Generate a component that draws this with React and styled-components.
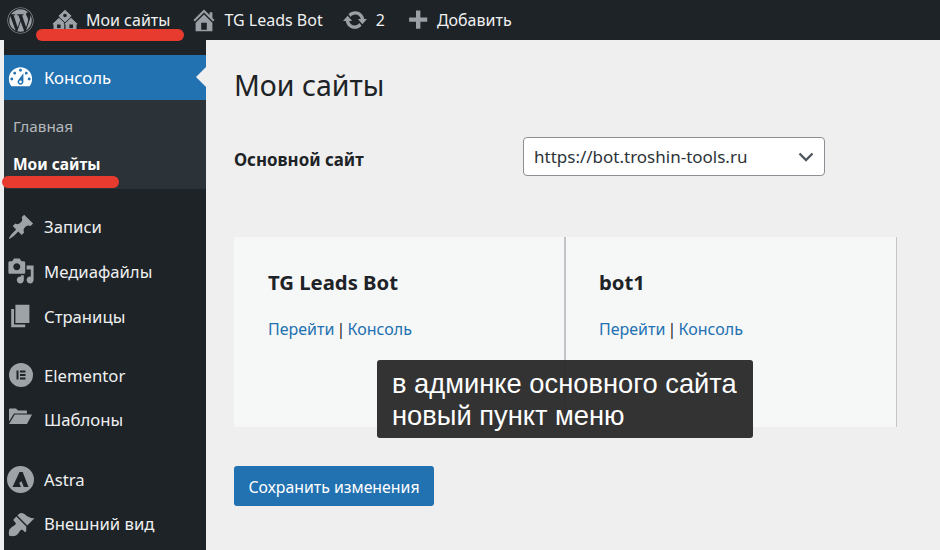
import React from 'react';
import styled, { createGlobalStyle } from 'styled-components';
import { FaWordpress } from 'react-icons/fa';

const GlobalStyle = createGlobalStyle`
  html, body {
    margin: 0;
    padding: 0;
    height: 100%;
    background: #efefef;
    overflow: hidden;
    font-family: "Noto Sans", "Open Sans", sans-serif;
  }
  * { box-sizing: border-box; }
`;

const Page = styled.div`
  position: relative;
  width: 940px;
  height: 550px;
  overflow: hidden;
`;

/* top admin bar */
const TopBar = styled.header`
  display: flex;
  align-items: center;
  height: 40px;
  background: #1d2327;
  color: #f0f0f1;
  font-size: 16px;
  padding-left: 7px;
`;

const BarItem = styled.div`
  display: flex;
  align-items: center;
  gap: ${(p) => p.$gap || 8}px;
  margin-left: ${(p) => p.$left || 0}px;
  white-space: nowrap;
  svg { fill: #9aa0a5; flex: none; display: block; }
`;

const Body = styled.div`
  display: flex;
  height: 510px;
  padding-left: 4px;
`;

/* left menu */
const Sidebar = styled.nav`
  width: 202px;
  flex: none;
  background: #1d2327;
  padding-top: 15px;
`;

const MenuItem = styled.div`
  position: relative;
  display: flex;
  align-items: center;
  height: 44.6px;
  color: #f0f0f1;
  font-size: 16.7px;
  margin-top: ${(p) => p.$top || 0}px;
  background: ${(p) => (p.$active ? '#2271b1' : 'transparent')};
  ${(p) => p.$active && `
    color: #fff;
    padding-top: 1px;
    &::after {
      content: '';
      position: absolute;
      right: 0;
      top: 50%;
      margin-top: -10px;
      border: 10px solid transparent;
      border-right-color: #efefef;
      border-left-width: 0;
    }
  `}
`;

const MenuIcon = styled.span`
  width: 33px;
  margin-right: 7px;
  flex: none;
  display: flex;
  justify-content: center;
  svg { display: block; fill: ${(p) => (p.$active ? '#fff' : '#9ea3a8')}; }
`;

const SubMenu = styled.div`
  background: #2c3338;
  height: 89px;
  padding: 8px 9px 0;
  margin-bottom: 16px;
`;

const SubItem = styled.div`
  height: 37.5px;
  display: flex;
  align-items: center;
  font-size: ${(p) => (p.$current ? 15.5 : 15.3)}px;
  color: ${(p) => (p.$current ? '#fff' : '#b4b9be')};
  font-weight: ${(p) => (p.$current ? 700 : 400)};
`;

/* main column */
const Main = styled.main`
  flex: 1;
  padding: 25px 42px 0 28px;
  color: #1d2327;
`;

const Title = styled.h1`
  margin: 0 0 32px;
  font-size: 28.5px;
  font-weight: 400;
  line-height: 40px;
`;

const FormRow = styled.div`
  display: flex;
  align-items: center;
  height: 39px;
  margin-bottom: 61px;
`;

const FieldLabel = styled.label`
  width: 289px;
  padding-top: 6px;
  font-size: 16.9px;
  font-weight: 700;
`;

const Select = styled.div`
  width: 302px;
  height: 39px;
  display: flex;
  align-items: center;
  justify-content: space-between;
  padding: 0 10px 0 10px;
  background: #fff;
  border: 1px solid #8c8f94;
  border-radius: 4px;
  font-size: 17px;
  color: #2c3338;
  svg { display: block; }
`;

const Cards = styled.div`
  display: grid;
  grid-template-columns: 332px 331px;
  height: 190px;
  margin-bottom: 39px;
`;

const Card = styled.div`
  padding: 30px 33px 0 34px;
  background: #f6f7f7;
  border-right: 2px solid #c3c4c7;

  &:last-child {
    padding-left: 33px;
    border-right-width: 1px;
  }
`;

const CardTitle = styled.h3`
  margin: 0 0 20px;
  font-size: 20.3px;
  font-weight: 700;
  line-height: 30px;
`;

const CardLinks = styled.div`
  font-size: 16px;
  line-height: 24px;
  word-spacing: -2px;
`;

const CardLink = styled.a`
  color: #2271b1;
`;

const SaveButton = styled.button`
  display: block;
  width: 200px;
  height: 40px;
  padding: 2px 0 0;
  border: 0;
  border-radius: 3px;
  background: #2271b1;
  color: #fff;
  font-family: inherit;
  font-size: 15.85px;
`;

/* annotations over the screenshot */
const Marker = styled.span`
  position: absolute;
  left: ${(p) => p.$x}px;
  top: ${(p) => p.$y}px;
  width: ${(p) => p.$w}px;
  height: 12px;
  border-radius: 6px;
  background: #e83b30;
`;

const Note = styled.div`
  position: absolute;
  left: 377px;
  top: 360px;
  width: 376px;
  height: 78px;
  padding: 8px 15px;
  border-radius: 3px;
  background: rgba(44, 44, 44, 0.97);
  color: #fff;
  font-family: "Liberation Sans", Arial, sans-serif;
  font-size: 27.3px;
  line-height: 32px;
`;

const Dash = ({ d, size = 28 }) => (
  <svg width={size} height={size} viewBox="0 0 20 20"><path fillRule="evenodd" d={d} /></svg>
);

const icons = {
  home: 'M16 8.5l1.53 1.53-1.06 1.06L10 4.62l-6.47 6.47-1.06-1.06L10 2.5l4 4v-2h2v4zm-6-2.46l6 5.99V18H4v-5.97zM12 17v-5H8v5h4z',
  update: 'M10.2 3.28c3.53 0 6.43 2.61 6.92 6h2.08l-3.5 4-3.5-4h2.32c-.45-1.97-2.21-3.45-4.32-3.45-1.45 0-2.73.71-3.54 1.78L4.95 5.66C6.23 4.2 8.11 3.28 10.2 3.28zm-.4 13.44c-3.52 0-6.43-2.61-6.92-6H.8l3.5-4c1.17 1.33 2.33 2.67 3.5 4H5.48c.45 1.97 2.21 3.45 4.32 3.45 1.45 0 2.73-.71 3.54-1.78l1.71 1.95c-1.28 1.46-3.15 2.38-5.25 2.38z',
  plus: 'M17 7.5v3.5h-5.5v5.5H8V11H2.500V7.500H8V2h3.500v5.500H17z',
  dashboard: 'M3.76 16h12.48c1.1-1.37 1.76-3.11 1.76-5 0-4.42-3.58-8-8-8s-8 3.58-8 8c0 1.89.66 3.63 1.76 5zM10 4c.55 0 1 .45 1 1s-.45 1-1 1-1-.45-1-1 .45-1 1-1zM6 6c.55 0 1 .45 1 1s-.45 1-1 1-1-.45-1-1 .45-1 1-1zm8 0c.55 0 1 .45 1 1s-.45 1-1 1-1-.45-1-1 .45-1 1-1zm-5.37 5.55L12 7v6c0 1.1-.9 2-2 2s-2-.9-2-2c0-.57.24-1.08.63-1.45zM4 10c.55 0 1 .45 1 1s-.45 1-1 1-1-.45-1-1 .45-1 1-1zm12 0c.55 0 1 .45 1 1s-.45 1-1 1-1-.45-1-1 .45-1 1-1zm-5 3c0-.55-.45-1-1-1s-1 .45-1 1 .45 1 1 1 1-.45 1-1z',
  post: 'M10.44 3.02l1.82-1.82 6.36 6.35-1.83 1.82c-1.05-.68-2.48-.57-3.41.36l-.75.75c-.92.93-1.04 2.35-.35 3.41l-1.83 1.82-2.41-2.41-2.8 2.79c-.42.42-3.38 2.71-3.8 2.29s1.86-3.39 2.28-3.81l2.79-2.79L4.1 9.36l1.83-1.82c1.05.69 2.48.57 3.4-.36l.75-.75c.93-.92 1.05-2.35.36-3.41z',
  media: 'M13 11V4c0-.55-.45-1-1-1h-1.67L9 1H5L3.67 3H2c-.55 0-1 .45-1 1v7c0 .55.45 1 1 1h10c.55 0 1-.45 1-1zM7 4.5c1.38 0 2.5 1.12 2.5 2.5S8.38 9.5 7 9.5 4.5 8.38 4.5 7 5.620 4.500 7 4.500zM14 6h5v10.500c0 1.380-1.120 2.500-2.500 2.500S14 17.880 14 16.500s1.120-2.500 2.500-2.500c.17 0 .34.02.5.05V9h-3V6zm-4 8.050V13h2v3.500c0 1.380-1.120 2.500-2.500 2.500S7 17.880 7 16.500 8.120 14 9.500 14c.17 0 .34.02.5.05z',
  page: 'M6 15V2h10v13H6zm-1 1h8v2H3V5h2v11z',
  brush: 'M14.48 11.060L7.410 3.990l1.500-1.500c.5-.56 2.300-.47 3.510.32 1.210.8 1.430 1.280 2.910 2.100 1.180.64 2.450 1.260 4.450.85zm-.71.71L6.700 4.700 4.930 6.470c-.39.39-.39 1.020 0 1.410l1.060 1.060c.39.39.39 1.030 0 1.420-.6.6-1.430 1.110-2.210 1.690-.35.26-.7.53-1.010.84C1.430 13.710.96 15.330 1.530 18.470c3.140.57 4.760.1 5.760-.9.31-.31.58-.66.84-1.010.58-.78 1.090-1.610 1.690-2.210.39-.39 1.030-.39 1.420 0l1.060 1.060c.39.39 1.020.39 1.410 0z',
};

// three small houses, dashicons multisite style
const SitesIcon = () => (
  <svg width="26" height="22" viewBox="0 0 26 22" stroke="#1d2327" strokeWidth="1">
    <path d="M13 .3L20 6.800 19 7.800V14H7V7.800L6 6.800z" />
    <circle cx="13" cy="6.500" r="1.800" fill="#1d2327" stroke="none" />
    <path d="M7 8.300L14 14.800 13 15.800V22H1V15.800L0 14.800z" />
    <path d="M19 8.300L26 14.800 25 15.800V22H13V15.800L12 14.800z" />
    <rect x="5" y="15.500" width="3.600" height="3.600" fill="#1d2327" stroke="none" />
    <rect x="17.400" y="15.500" width="3.600" height="3.600" fill="#1d2327" stroke="none" />
  </svg>
);

const ElementorIcon = () => (
  <svg width="24" height="24" viewBox="0 0 24 24">
    <path fillRule="evenodd" d="M12 0a12 12 0 1 0 0 24 12 12 0 0 0 0-24zM7.500 7.500h2v9h-2zM11 7.500h5.500v2H11zM11 11h5.500v2H11zM11 14.500h5.500v2H11z" />
  </svg>
);

const FolderIcon = () => (
  <svg width="23" height="24" viewBox="0 0 23 24">
    <path d="M0 1.500a1 1 0 0 1 1-1h6l2 2h8a1 1 0 0 1 1 1v2H5L0 13.500z" />
    <path d="M5.800 6.500H23L18 16H0z" />
  </svg>
);

const AstraIcon = () => (
  <svg width="27" height="27" viewBox="0 0 27 27">
    <path fillRule="evenodd" d="M13.500 0a13.500 13.500 0 1 0 0 27 13.500 13.500 0 0 0 0-27zM12.500 6h3.200L21.500 21h-4.700l-2.300-5.800-2.300 1.800 1.800 4H5.500z" />
  </svg>
);

const menu = [
  { label: 'Записи', icon: <Dash d={icons.post} /> },
  { label: 'Медиафайлы', icon: <Dash d={icons.media} /> },
  { label: 'Страницы', icon: <Dash d={icons.page} /> },
  { label: 'Elementor', icon: <ElementorIcon />, top: 14.6 },
  { label: 'Шаблоны', icon: <FolderIcon /> },
  { label: 'Astra', icon: <AstraIcon />, top: 14.6 },
  { label: 'Внешний вид', icon: <Dash d={icons.brush} /> },
];

export default function App() {
  return (
    <Page>
      <GlobalStyle />
      <TopBar>
        <BarItem><FaWordpress size={27} /></BarItem>
        <BarItem $left={18}><SitesIcon />Мои сайты</BarItem>
        <BarItem $left={19.500} $gap={6.500}><Dash d={icons.home} />TG Leads Bot</BarItem>
        <BarItem $left={19} $gap={8}><Dash d={icons.update} size={26} />2</BarItem>
        <BarItem $left={21} $gap={6}><Dash d={icons.plus} size={25} />Добавить</BarItem>
      </TopBar>
      <Body>
        <Sidebar>
          <MenuItem $active>
            <MenuIcon $active><Dash d={icons.dashboard} size={29} /></MenuIcon>
            Консоль
          </MenuItem>
          <SubMenu>
            <SubItem>Главная</SubItem>
            <SubItem $current>Мои сайты</SubItem>
          </SubMenu>
          {menu.map((item) => (
            <MenuItem key={item.label} $top={item.top}>
              <MenuIcon>{item.icon}</MenuIcon>
              {item.label}
            </MenuItem>
          ))}
        </Sidebar>
        <Main>
          <Title>Мои сайты</Title>
          <FormRow>
            <FieldLabel>Основной сайт</FieldLabel>
            <Select>
              https://bot.troshin-tools.ru
              <svg width="16" height="10" viewBox="0 0 16 10"><path d="M1.500 1.500L8 8l6.500-6.500" fill="none" stroke="#50575e" strokeWidth="2.400" /></svg>
            </Select>
          </FormRow>
          <Cards>
            <Card>
              <CardTitle>TG Leads Bot</CardTitle>
              <CardLinks><CardLink>Перейти</CardLink> | <CardLink>Консоль</CardLink></CardLinks>
            </Card>
            <Card>
              <CardTitle>bot1</CardTitle>
              <CardLinks><CardLink>Перейти</CardLink> | <CardLink>Консоль</CardLink></CardLinks>
            </Card>
          </Cards>
          <SaveButton>Сохранить изменения</SaveButton>
        </Main>
      </Body>
      <Marker $x={36} $y={29} $w={148} />
      <Marker $x={2} $y={176} $w={117} />
      <Note>в админке основного сайта<br />новый пункт меню</Note>
    </Page>
  );
}
